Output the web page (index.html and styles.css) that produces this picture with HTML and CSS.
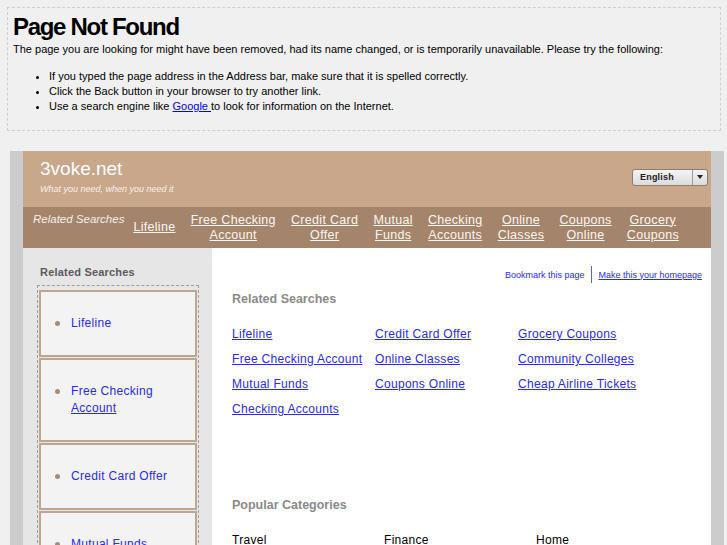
FILE: index.html
```html
<!DOCTYPE html>
<html>
<head>
<meta charset="utf-8">
<title>Page Not Found</title>
<link rel="stylesheet" href="styles.css">
</head>
<body>
<div class="notice">
  <h1>Page Not Found</h1>
  <p>The page you are looking for might have been removed, had its name changed, or is temporarily unavailable. Please try the following:</p>
  <ul>
    <li>If you typed the page address in the Address bar, make sure that it is spelled correctly.</li>
    <li>Click the Back button in your browser to try another link.</li>
    <li>Use a search engine like <a href="#">Google </a> to look for information on the Internet.</li>
  </ul>
</div>

<div class="site">
  <div class="header">
    <div class="brand">
      <div class="logo">3voke.net</div>
      <div class="tagline">What you need, when you need it</div>
    </div>
    <div class="lang">
      <span class="lang-text">English</span>
      <span class="lang-arrow"></span>
    </div>
  </div>

  <div class="nav">
    <span class="nav-label">Related Searches</span>
    <div class="nav-links">
      <a href="#">Lifeline</a>
      <a href="#">Free Checking<br>Account</a>
      <a href="#">Credit Card<br>Offer</a>
      <a href="#">Mutual<br>Funds</a>
      <a href="#">Checking<br>Accounts</a>
      <a href="#">Online<br>Classes</a>
      <a href="#">Coupons<br>Online</a>
      <a href="#">Grocery<br>Coupons</a>
    </div>
  </div>

  <div class="body">
    <div class="sidebar">
      <div class="side-title">Related Searches</div>
      <ul class="side-list">
        <li><a href="#">Lifeline</a></li>
        <li><a href="#">Free Checking <span class="u">Account</span></a></li>
        <li><a href="#">Credit Card Offer</a></li>
        <li><a href="#">Mutual Funds</a></li>
      </ul>
    </div>
    <div class="main">
      <div class="toolbar">
        <a href="#" class="bookmark">Bookmark this page</a>
        <span class="sep"></span>
        <a href="#" class="homepage">Make this your homepage</a>
      </div>
      <h2 class="section-title">Related Searches</h2>
      <div class="links">
        <a href="#">Lifeline</a>
        <a href="#">Credit Card Offer</a>
        <a href="#">Grocery Coupons</a>
        <a href="#">Free Checking Account</a>
        <a href="#">Online Classes</a>
        <a href="#">Community Colleges</a>
        <a href="#">Mutual Funds</a>
        <a href="#">Coupons Online</a>
        <a href="#">Cheap Airline Tickets</a>
        <a href="#">Checking Accounts</a>
      </div>
      <h2 class="section-title popular">Popular Categories</h2>
      <div class="cats">
        <span>Travel</span>
        <span>Finance</span>
        <span>Home</span>
      </div>
    </div>
  </div>
</div>
</body>
</html>
```

FILE: styles.css
```css
html, body {
  margin: 0;
  padding: 0;
  background: #f0f0f0;
  font-family: "Liberation Sans", Arial, sans-serif;
  color: #000;
}

.notice {
  margin: 7px 6px 0 7px;
  border: 1px dashed #cfcfcf;
  padding: 5px 5px 8px 5px;
}

.notice h1 {
  margin: 0;
  font-size: 24px;
  line-height: 28px;
  font-weight: bold;
  letter-spacing: -1.3px;
}

.notice p {
  margin: 0;
  font-size: 11px;
  line-height: 16px;
}

.notice ul {
  margin: 12px 0 8px 0;
  padding-left: 36px;
  font-size: 11px;
  line-height: 15px;
}

.notice a {
  color: #0000ee;
}

.site {
  margin: 20px 3px 0 10px;
  border-left: 13px solid #cccccc;
  border-right: 13px solid #cccccc;
}

.header {
  background: #c9a78b;
  height: 56px;
  display: flex;
  justify-content: space-between;
  align-items: flex-start;
  padding: 0 3px 0 17px;
}

.brand {
  padding-top: 7px;
}

.logo {
  color: #ffffff;
  font-size: 19px;
  line-height: 22px;
}

.tagline {
  color: #f7f0e9;
  font-size: 9px;
  font-style: italic;
  line-height: 12px;
  margin-top: 3px;
}

.lang {
  margin-top: 18px;
  width: 76px;
  height: 17px;
  box-sizing: border-box;
  border: 1px solid #8d7b6b;
  border-radius: 3px;
  background: linear-gradient(#f4f4f4, #dcdcdc);
  display: flex;
  align-items: stretch;
}

.lang-text {
  flex: 1;
  font-size: 9px;
  line-height: 15px;
  padding-left: 7px;
  color: #222;
  font-weight: bold;
  letter-spacing: 0.2px;
}

.lang-arrow {
  width: 14px;
  border-left: 1px solid #9a9a9a;
  position: relative;
}

.lang-arrow::after {
  content: "";
  position: absolute;
  left: 4px;
  top: 5px;
  border-left: 3px solid transparent;
  border-right: 3px solid transparent;
  border-top: 4px solid #222;
}

.nav {
  background: #a4846b;
  height: 41px;
  display: flex;
  align-items: center;
  padding: 0 32px 0 10px;
}

.nav-label {
  align-self: flex-start;
  margin-top: 5px;
  color: #f6efe8;
  font-style: italic;
  font-size: 11.5px;
  line-height: 15px;
  margin-right: 9px;
  white-space: nowrap;
}

.nav-links {
  flex: 1;
  display: flex;
  justify-content: space-between;
  align-items: center;
}

.nav-links a {
  color: #fcf7f1;
  font-size: 12.5px;
  line-height: 15px;
  text-align: center;
  letter-spacing: 0.3px;
  text-decoration: underline;
}

.body {
  display: flex;
  align-items: stretch;
  height: 300px;
}

.sidebar {
  width: 189px;
  background: #e6e6e6;
  padding: 18px 13px 0 14px;
  box-sizing: border-box;
  flex: none;
}

.side-title {
  font-size: 11px;
  font-weight: bold;
  color: #5a5a5a;
  line-height: 13px;
  padding-left: 3px;
  letter-spacing: 0.2px;
}

.side-list {
  list-style: none;
  margin: 6px 0 0 0;
  padding: 4px 1px 0 1px;
  border: 1px dashed #9e9e9e;
  border-bottom: none;
}

.side-list li {
  background: #f3f3f3;
  border: 2px solid #bda792;
  padding: 23px 10px 23px 13px;
  margin-bottom: 1px;
  display: flex;
  align-items: flex-start;
}

.side-list li::before {
  content: "";
  flex: none;
  width: 5px;
  height: 5px;
  border-radius: 50%;
  background: #a88c74;
  margin: 6px 11px 0 1px;
}

.side-list a {
  color: #2a2af0;
  font-size: 12px;
  line-height: 17px;
  letter-spacing: 0.3px;
  text-decoration: none;
}

.side-list .u {
  text-decoration: underline;
}

.main {
  flex: 1;
  background: #ffffff;
  padding: 18px 9px 0 20px;
}

.toolbar {
  display: flex;
  justify-content: flex-end;
  align-items: center;
  font-size: 9px;
  line-height: 12px;
}

.toolbar a {
  color: #2a2af0;
}

.toolbar .bookmark {
  text-decoration: none;
}

.sep {
  width: 1px;
  height: 17px;
  background: #5a5af0;
  margin: 0 6px 0 7px;
}

.section-title {
  margin: 8px 0 0 0;
  font-size: 12.5px;
  line-height: 16px;
  color: #8a8a8a;
  font-weight: bold;
}

.links {
  display: grid;
  grid-template-columns: 143px 143px 143px;
  row-gap: 8px;
  margin-top: 19px;
}

.links a {
  color: #2a2af0;
  font-size: 12px;
  line-height: 17px;
  letter-spacing: 0.3px;
  white-space: nowrap;
}

.popular {
  margin-top: 79px;
}

.cats {
  display: grid;
  grid-template-columns: 152px 152px 152px;
  margin-top: 19px;
  font-size: 12px;
  line-height: 17px;
  letter-spacing: 0.3px;
}
```
